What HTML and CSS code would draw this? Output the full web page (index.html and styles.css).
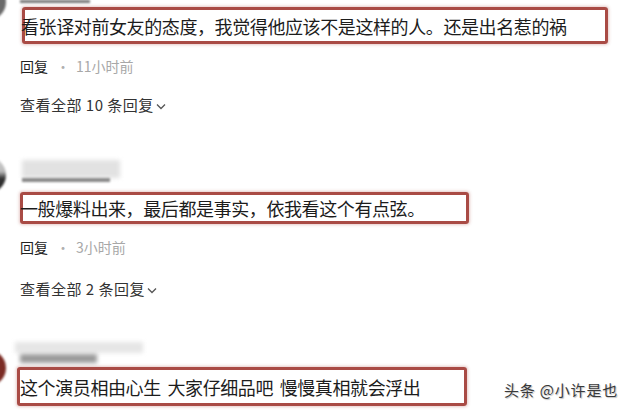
FILE: index.html
```html
<!DOCTYPE html>
<html lang="zh-CN">
  <head>
    <meta charset="UTF-8" />
    <meta name="viewport" content="width=device-width, initial-scale=1.0" />
    <title>评论</title>
    <link rel="stylesheet" href="styles.css">
  </head>
  <body>
    <div class="feed">
      <div class="comment c1">
        <div class="avatar a1"></div>
        <div class="content">
          <div class="name n1"></div>
          <div class="hl hl1"><p class="text">看张译对前女友的态度，我觉得他应该不是这样的人。还是出名惹的祸</p></div>
          <div class="meta">回复<span class="dot">·</span><span class="time">11小时前</span></div>
          <div class="more">查看全部 10 条回复<svg class="chev" width="10" height="7" viewBox="0 0 10 7"><path d="M1 1.5 L5 5.5 L9 1.5" fill="none" stroke="#555" stroke-width="1.3"/></svg></div>
        </div>
      </div>

      <div class="comment c2">
        <div class="avatar a2"></div>
        <div class="content">
          <div class="name n2"><div class="blur-bg"></div><div class="blur-txt"></div></div>
          <div class="hl hl2"><p class="text">一般爆料出来，最后都是事实，依我看这个有点弦。</p></div>
          <div class="meta m2">回复<span class="dot">·</span><span class="time">3小时前</span></div>
          <div class="more mo2">查看全部 2 条回复<svg class="chev" width="10" height="7" viewBox="0 0 10 7"><path d="M1 1.5 L5 5.5 L9 1.5" fill="none" stroke="#555" stroke-width="1.3"/></svg></div>
        </div>
      </div>

      <div class="comment c3">
        <div class="avatar a3"></div>
        <div class="content">
          <div class="name n3"><div class="blur-bg"></div><div class="blur-txt"></div></div>
          <div class="last-row">
            <div class="hl hl3"><p class="text">这个演员相由心生 大家仔细品吧 慢慢真相就会浮出</p></div>
            <div class="mark">头条 @小许是也</div>
          </div>
        </div>
      </div>
    </div>
  </body>
</html>
```

FILE: styles.css
```css
body {
  margin: 0;
  background: #fff;
  font-family: "Noto Sans CJK SC", "Noto Sans", sans-serif;
  color: #222;
}
.feed {
  width: 634px;
  height: 410px;
  overflow: hidden;
}
.comment {
  display: grid;
  grid-template-columns: 20px 1fr;
}
.c2 {
  margin-top: 45px;
}
.c3 {
  margin-top: 43px;
}

/* avatars are cut by the left edge */
.avatar {
  width: 36px;
  height: 36px;
  border-radius: 50%;
  margin-left: -30px;
  filter: blur(1px);
}
.a1 {
  margin-top: -16px;
  background: #6a6a6a;
}
.a2 {
  margin-top: -3px;
  background: linear-gradient(#cfcfcf 0%, #bbb 40%, #333 60%, #222 100%);
}
.a3 {
  margin-top: 8px;
  background: #7b2b24;
}

/* blurred user names */
.name {
  position: relative;
}
.n1 {
  width: 70px;
  height: 3px;
  background: #777;
  filter: blur(1px);
}
.n2 {
  height: 23px;
}
.n2 .blur-bg {
  width: 98px;
  height: 18px;
  margin-left: 2px;
  background: #e2e2e2;
  filter: blur(2px);
}
.n2 .blur-txt {
  width: 88px;
  height: 4px;
  margin-left: 2px;
  background: #8a8a8a;
  filter: blur(1px);
}
.n3 {
  height: 22px;
}
.n3 .blur-bg {
  width: 128px;
  height: 11px;
  margin-left: -5px;
  background: #e6e6e6;
  filter: blur(2px);
}
.n3 .blur-txt {
  width: 77px;
  height: 9px;
  margin-top: 1px;
  background: #9a9a9a;
  filter: blur(2px);
}

/* red highlight boxes */
.hl {
  box-sizing: border-box;
  display: flex;
  align-items: center;
  border: 3px solid #a94b45;
  border-radius: 3px;
  box-shadow: 0 0 3px 1px rgba(169, 75, 69, 0.3);
}
.text {
  margin: 0;
  font-size: 18px;
  letter-spacing: -0.4px;
  word-spacing: 3px;
  color: #1c1c1c;
  white-space: nowrap;
}
.hl1 {
  width: 586px;
  height: 37px;
  margin: 4px 0 0 2px;
}
.hl1 .text {
  margin-left: -4px;
}
.hl2 {
  width: 449px;
  height: 32px;
  margin-top: 9px;
}
.hl2 .text {
  margin-left: -3px;
}
.hl3 {
  width: 450px;
  height: 39px;
  margin-left: -3px;
}
.hl3 .text {
  margin-left: 0;
}

.meta {
  margin-top: 12px;
  font-size: 14px;
  line-height: 20px;
  color: #222;
}
.m2 {
  margin-top: 13px;
}
.dot {
  margin: 0 6px 0 8px;
  color: #b0b0b0;
}
.time {
  color: #a8a8a8;
}
.more {
  margin-top: 19px;
  font-size: 15px;
  letter-spacing: 0.5px;
  line-height: 20px;
  color: #333;
  display: flex;
  align-items: center;
}
.mo2 {
  margin-top: 22px;
}
.chev {
  margin-left: 2px;
  margin-top: 3px;
}

.last-row {
  display: flex;
  align-items: center;
  margin-top: 3px;
}
.mark {
  margin-left: auto;
  margin-right: 16px;
  padding-top: 6px;
  font-size: 15px;
  letter-spacing: 0.8px;
  color: #3a3a3a;
  text-shadow: 1px 1px 1px rgba(0, 0, 0, 0.25);
}
```
